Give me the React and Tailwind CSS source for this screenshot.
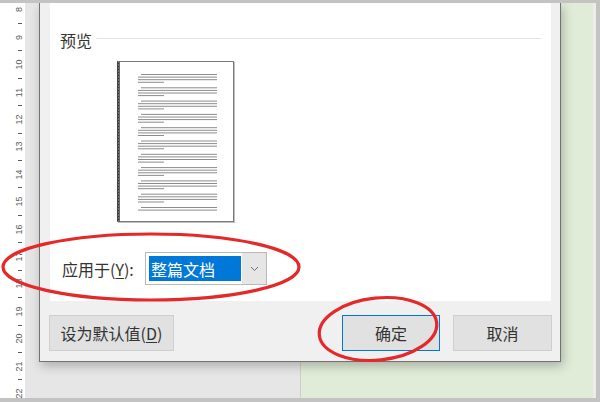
import React from 'react'

const cjk = { fontFamily: '"Noto Sans CJK SC", "Noto Sans", sans-serif' }

const nums = [8, 9, 10, 11, 12, 13, 14, 15, 16, 17, 18, 19, 20, 21, 22]

const Ruler = () => (
  <div className='w-[25px] h-full bg-white flex flex-col overflow-hidden shrink-0'>
    {nums.map((n, i) => (
      <React.Fragment key={n}>
        <div className='h-[13.71px] shrink-0 flex items-center justify-center pl-[14px]'>
          <span className='-rotate-90 text-[9px] leading-none text-[#5a5a5a]' style={{ fontFamily: '"Liberation Sans", sans-serif' }}>{n}</span>
        </div>
        {i < nums.length - 1 && (
          <div className='h-[13.71px] shrink-0 flex items-center justify-center pl-[14px]'>
            <div className='w-[4px] h-px bg-[#5a5a5a]' />
          </div>
        )}
      </React.Fragment>
    ))}
  </div>
)

const PagePreview = () => {
  const lines = []
  for (let g = 0; g < 11; g++) {
    const y = 13.5 + g * 13.3
    const rows = g === 10 ? 2 : 4
    for (let r = 0; r < rows; r++) {
      const ly = y + r * 2.6
      const x1 = r === 0 ? 24 : 21
      const x2 = r === 3 ? 47 : 100
      lines.push(<line key={`${g}-${r}`} x1={x1} x2={x2} y1={ly} y2={ly} stroke='#8c8c8c' strokeWidth='1' />)
    }
  }
  return (
    <svg width='120' height='164' viewBox='0 0 120 164'>
      <rect x='1' y='1' width='117' height='161' fill='#000' opacity='0.25' />
      <rect x='0.5' y='0.5' width='116' height='160' fill='#fff' stroke='#7a7a7a' strokeWidth='1' />
      <line x1='1.5' x2='1.5' y1='0.5' y2='160.5' stroke='#333' strokeWidth='2.5' />
      <line x1='1.5' x2='1.5' y1='0.5' y2='160.5' stroke='#aaa' strokeWidth='1' strokeDasharray='1 2' />
      {lines}
    </svg>
  )
}

const Button = ({ children, primary, className }) => (
  <div className={`h-[36px] flex items-center justify-center bg-[#e1e1e1] border text-[16px] text-[#333] ${primary ? 'border-[#0078d7]' : 'border-[#cfcfcf]'} ${className}`} style={cjk}>
    {children}
  </div>
)

const Dialog = () => (
  <div className='absolute left-[14px] top-0 w-[522px] h-[359px] bg-[#f0f0f0] border-x border-b border-[#727272] shadow-[2px_4px_10px_rgba(0,0,0,0.25)] flex flex-col pl-[10px] pr-[9px]'>
    <div className='h-[298px] bg-white flex flex-col pt-[27px] pl-[10px] pr-[10px] pb-[16px]'>
      <div className='h-[20px] flex items-center gap-[4px]'>
        <span className='text-[16px] leading-[20px] text-[#333]' style={cjk}>预览</span>
        <div className='flex-1 h-px bg-[#e3e3e3] -mt-[3px]' />
      </div>
      <div className='mt-[11px] ml-[57px]'>
        <PagePreview />
      </div>
      <div className='mt-[27px] flex items-center'>
        <span className='ml-[2px] text-[16px] text-[#333] w-[83px]' style={cjk}>
          应用于(<span className='underline underline-offset-2'>Y</span>):
        </span>
        <div className='w-[122px] h-[33px] border border-[#b9b9b9] bg-white flex'>
          <div className='flex-1 p-[3px] pr-[1px]'>
            <div className='h-full bg-[#0078d7] flex items-center pl-[2px] text-[16px] text-white' style={cjk}>整篇文档</div>
          </div>
          <div className='w-[24px] bg-[#e6e6e6] flex items-center justify-center'>
            <svg width='9' height='6' viewBox='0 0 9 6'>
              <path d='M1 1 L4.5 4.5 L8 1' fill='none' stroke='#707070' strokeWidth='1' />
            </svg>
          </div>
        </div>
      </div>
    </div>
    <div className='mt-[14px] flex justify-between'>
      <Button className='w-[125px] -ml-[1px]'>
        <span>设为默认值(<span className='underline underline-offset-2'>D</span>)</span>
      </Button>
      <div className='flex gap-[13px] -mr-[1px]'>
        <Button primary className='w-[98px]'>确定</Button>
        <Button className='w-[99px]'>取消</Button>
      </div>
    </div>
  </div>
)

export default function App() {
  return (
    <div className='relative w-[600px] h-[402px] border-t-[3px] border-r-[4px] border-b-[4px] border-[#c3c3c3] flex overflow-hidden'>
      <Ruler />
      <div className='relative flex-1 h-full flex'>
        <div className='w-[275px] h-full bg-[#e6e6e6]' />
        <div className='flex-1 h-full bg-[#e1ecd8] border-l border-[#c9d2c2]' />
        <div className='w-[3px] h-full bg-[#ececec]' />
        <Dialog />
      </div>
      <svg className='absolute left-0 top-0 pointer-events-none' width='600' height='395'>
        <ellipse cx='151' cy='264' rx='148' ry='33' fill='none' stroke='#e4292b' strokeWidth='3.2' />
        <ellipse cx='378' cy='326' rx='59' ry='31' fill='none' stroke='#e4292b' strokeWidth='3.2' transform='rotate(-6 378 326)' />
      </svg>
    </div>
  )
}
